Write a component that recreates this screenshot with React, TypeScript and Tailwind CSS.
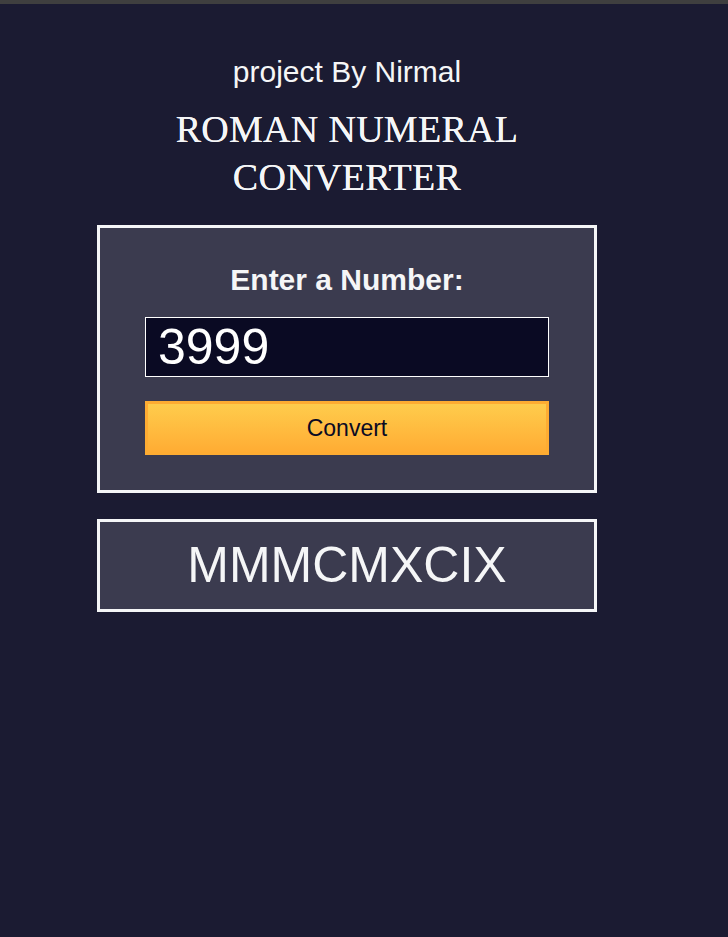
import { useState } from "react";

function toRoman(n: number): string {
  const table: [number, string][] = [
    [1000, "M"], [900, "CM"], [500, "D"], [400, "CD"],
    [100, "C"], [90, "XC"], [50, "L"], [40, "XL"],
    [10, "X"], [9, "IX"], [5, "V"], [4, "IV"], [1, "I"],
  ];
  let out = "";
  for (const [v, s] of table) {
    while (n >= v) {
      out += s;
      n -= v;
    }
  }
  return out;
}

export default function App() {
  const [value, setValue] = useState("3999");
  const [result, setResult] = useState(toRoman(3999));

  function handleConvert() {
    const n = parseInt(value, 10);
    if (isNaN(n)) setResult("Please enter a valid number");
    else if (n < 1) setResult("Please enter a number greater than or equal to 1");
    else if (n > 3999) setResult("Please enter a number less than or equal to 3999");
    else setResult(toRoman(n));
  }

  return (
    <div className="min-h-[937px] bg-[#1b1b32] text-[#f5f6f7] font-['Liberation_Sans',Arial,sans-serif]">
      <div className="h-[4px] bg-[#3f3f3f]" />
      <main className="w-[694px] flex flex-col items-center">
        <p className="mt-[51px] text-[30px] leading-[34px]">project By Nirmal</p>
        <h1 className="mt-[16px] text-center text-[38px] leading-[48px] font-['Liberation_Serif','Times_New_Roman',serif] tracking-[0.3px] [text-shadow:0_0_0.6px_#f5f6f7]">
          ROMAN NUMERAL
          <br />
          CONVERTER
        </h1>

        <form
          className="mt-[24px] w-[500px] border-[3px] border-[#f5f6f7] bg-[#3b3b4f] flex flex-col items-center pt-[35px] pb-[35px]"
          onSubmit={(e) => {
            e.preventDefault();
            handleConvert();
          }}
        >
          <label htmlFor="number" className="text-[30px] leading-[34px] font-bold">
            Enter a Number:
          </label>
          <input
            id="number"
            type="number"
            value={value}
            onChange={(e) => setValue(e.target.value)}
            className="mt-[20px] w-[404px] h-[60px] border border-white bg-[#0a0a23] pl-[12px] text-[50px] text-white outline-none [appearance:textfield] [&::-webkit-inner-spin-button]:appearance-none"
          />
          <button
            type="submit"
            className="mt-[24px] w-[404px] h-[54px] border-[3px] border-[#feac32] bg-gradient-to-b from-[#fecc4c] to-[#ffac33] text-[23px] text-[#0a0a23]"
          >
            Convert
          </button>
        </form>

        <div className="mt-[26px] w-[500px] h-[93px] border-[3px] border-[#f5f6f7] bg-[#3b3b4f] flex items-center justify-center text-[50px]">
          {result}
        </div>
      </main>
    </div>
  );
}
